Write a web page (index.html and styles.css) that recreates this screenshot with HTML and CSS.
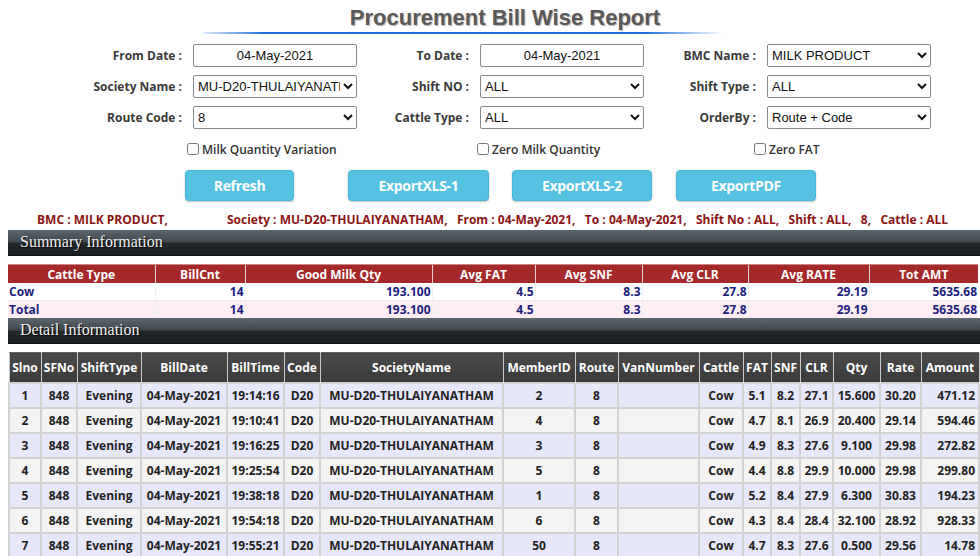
FILE: index.html
```html
<!DOCTYPE html>
<html>
<head>
<meta charset="utf-8">
<link rel="stylesheet" href="styles.css">
</head>
<body>
<div class="page">
  <h1 class="title">Procurement Bill Wise Report</h1>
  <div class="title-line"></div>

  <div class="form-grid">
    <div class="field"><label class="lbl">From Date :</label><input class="ctl txt" type="text" value="04-May-2021"></div>
    <div class="field"><label class="lbl">To Date :</label><input class="ctl txt" type="text" value="04-May-2021"></div>
    <div class="field"><label class="lbl">BMC Name :</label><select class="ctl"><option>MILK PRODUCT</option></select></div>

    <div class="field"><label class="lbl">Society Name :</label><select class="ctl"><option>MU-D20-THULAIYANATHAM</option></select></div>
    <div class="field"><label class="lbl">Shift NO :</label><select class="ctl"><option>ALL</option></select></div>
    <div class="field"><label class="lbl">Shift Type :</label><select class="ctl"><option>ALL</option></select></div>

    <div class="field"><label class="lbl">Route Code :</label><select class="ctl"><option>8</option></select></div>
    <div class="field"><label class="lbl">Cattle Type :</label><select class="ctl"><option>ALL</option></select></div>
    <div class="field"><label class="lbl">OrderBy :</label><select class="ctl"><option>Route + Code</option></select></div>
  </div>

  <div class="check-grid">
    <label class="chk chk1"><input type="checkbox">Milk Quantity Variation</label>
    <label class="chk chk2"><input type="checkbox">Zero Milk Quantity</label>
    <label class="chk chk3"><input type="checkbox">Zero FAT</label>
  </div>

  <div class="buttons">
    <button class="btn b-refresh">Refresh</button>
    <button class="btn b-x1">ExportXLS-1</button>
    <button class="btn b-x2">ExportXLS-2</button>
    <button class="btn b-pdf">ExportPDF</button>
  </div>

  <div class="criteria"><span class="crit-bmc">BMC : MILK PRODUCT,</span><span>Society : MU-D20-THULAIYANATHAM,&nbsp;&nbsp; From : 04-May-2021,&nbsp;&nbsp; To : 04-May-2021,&nbsp;&nbsp; Shift No : ALL,&nbsp;&nbsp; Shift : ALL,&nbsp;&nbsp; 8,&nbsp;&nbsp; Cattle : ALL</span></div>

  <div class="bar bar-summary">Summary Information</div>

  <table class="summary">
    <colgroup>
      <col style="width:147px"><col style="width:90px"><col style="width:187px"><col style="width:103px">
      <col style="width:107px"><col style="width:106px"><col style="width:121px"><col style="width:109px">
    </colgroup>
    <thead>
      <tr><th>Cattle Type</th><th>BillCnt</th><th>Good Milk Qty</th><th>Avg FAT</th><th>Avg SNF</th><th>Avg CLR</th><th>Avg RATE</th><th>Tot AMT</th></tr>
    </thead>
    <tbody>
      <tr class="s-row"><td class="l">Cow</td><td>14</td><td>193.100</td><td>4.5</td><td>8.3</td><td>27.8</td><td>29.19</td><td>5635.68</td></tr>
      <tr class="s-total"><td class="l">Total</td><td>14</td><td>193.100</td><td>4.5</td><td>8.3</td><td>27.8</td><td>29.19</td><td>5635.68</td></tr>
    </tbody>
  </table>

  <div class="bar bar-detail">Detail Information</div>

  <table class="detail">
    <colgroup>
      <col style="width:32px"><col style="width:36px"><col style="width:64px"><col style="width:86px"><col style="width:57px">
      <col style="width:36px"><col style="width:183px"><col style="width:72px"><col style="width:43px"><col style="width:81px">
      <col style="width:44px"><col style="width:28px"><col style="width:29px"><col style="width:33px"><col style="width:47px">
      <col style="width:41px"><col style="width:58px">
    </colgroup>
    <thead>
      <tr><th>Slno</th><th>SFNo</th><th>ShiftType</th><th>BillDate</th><th>BillTime</th><th>Code</th><th>SocietyName</th><th>MemberID</th><th>Route</th><th>VanNumber</th><th>Cattle</th><th>FAT</th><th>SNF</th><th>CLR</th><th>Qty</th><th>Rate</th><th>Amount</th></tr>
    </thead>
    <tbody>
      <tr class="odd"><td>1</td><td>848</td><td>Evening</td><td>04-May-2021</td><td>19:14:16</td><td>D20</td><td>MU-D20-THULAIYANATHAM</td><td>2</td><td>8</td><td></td><td>Cow</td><td>5.1</td><td>8.2</td><td>27.1</td><td>15.600</td><td>30.20</td><td class="r">471.12</td></tr>
      <tr class="even"><td>2</td><td>848</td><td>Evening</td><td>04-May-2021</td><td>19:10:41</td><td>D20</td><td>MU-D20-THULAIYANATHAM</td><td>4</td><td>8</td><td></td><td>Cow</td><td>4.7</td><td>8.1</td><td>26.9</td><td>20.400</td><td>29.14</td><td class="r">594.46</td></tr>
      <tr class="odd"><td>3</td><td>848</td><td>Evening</td><td>04-May-2021</td><td>19:16:25</td><td>D20</td><td>MU-D20-THULAIYANATHAM</td><td>3</td><td>8</td><td></td><td>Cow</td><td>4.9</td><td>8.3</td><td>27.6</td><td>9.100</td><td>29.98</td><td class="r">272.82</td></tr>
      <tr class="even"><td>4</td><td>848</td><td>Evening</td><td>04-May-2021</td><td>19:25:54</td><td>D20</td><td>MU-D20-THULAIYANATHAM</td><td>5</td><td>8</td><td></td><td>Cow</td><td>4.4</td><td>8.8</td><td>29.9</td><td>10.000</td><td>29.98</td><td class="r">299.80</td></tr>
      <tr class="odd"><td>5</td><td>848</td><td>Evening</td><td>04-May-2021</td><td>19:38:18</td><td>D20</td><td>MU-D20-THULAIYANATHAM</td><td>1</td><td>8</td><td></td><td>Cow</td><td>5.2</td><td>8.4</td><td>27.9</td><td>6.300</td><td>30.83</td><td class="r">194.23</td></tr>
      <tr class="even"><td>6</td><td>848</td><td>Evening</td><td>04-May-2021</td><td>19:54:18</td><td>D20</td><td>MU-D20-THULAIYANATHAM</td><td>6</td><td>8</td><td></td><td>Cow</td><td>4.3</td><td>8.4</td><td>28.4</td><td>32.100</td><td>28.92</td><td class="r">928.33</td></tr>
      <tr class="odd"><td>7</td><td>848</td><td>Evening</td><td>04-May-2021</td><td>19:55:21</td><td>D20</td><td>MU-D20-THULAIYANATHAM</td><td>50</td><td>8</td><td></td><td>Cow</td><td>4.7</td><td>8.3</td><td>27.6</td><td>0.500</td><td>29.56</td><td class="r">14.78</td></tr>
    </tbody>
  </table>
</div>
</body>
</html>
```

FILE: styles.css
```css
html, body {
  margin: 0;
  padding: 0;
  overflow: hidden;
  background: #ffffff;
}

body {
  font-family: "Open Sans", "Liberation Sans", sans-serif;
  color: #333;
}

.page {
  width: 972px;
  padding-left: 8px;
}

.title {
  margin: 0;
  padding: 5px 0 0 22px;
  text-align: center;
  font-family: "Liberation Sans", Arial, sans-serif;
  font-size: 22px;
  line-height: 26px;
  font-weight: bold;
  color: #595959;
  text-shadow: 1px 1px 1px #b5b5b5;
}

.title-line {
  margin: 1px 0 0 195px;
  width: 520px;
  height: 2px;
  background: linear-gradient(to right, rgba(20, 110, 225, 0.15), #1a6fe0 12%, #1a6fe0 85%, rgba(20, 110, 225, 0));
}

.form-grid {
  display: grid;
  grid-template-columns: repeat(3, 287px);
  row-gap: 8px;
  margin-top: 10px;
  padding-left: 62px;
}

.field {
  display: flex;
  align-items: center;
}

.lbl {
  width: 123px;
  padding-right: 11px;
  box-sizing: border-box;
  text-align: right;
  font-size: 12px;
  font-weight: bold;
  color: #3a3a3a;
}

.ctl {
  width: 164px;
  height: 23px;
  box-sizing: border-box;
  margin: 0;
  border: 1px solid #8a8a8a;
  border-radius: 2px;
  background: #fff;
  font-family: "Liberation Sans", Arial, sans-serif;
  font-size: 13px;
  color: #111;
  padding: 0;
}

.txt {
  text-align: center;
}

.check-grid {
  display: grid;
  grid-template-columns: repeat(3, 287px);
  padding-left: 62px;
  margin-top: 11px;
  height: 18px;
}

.chk {
  display: flex;
  align-items: center;
  gap: 3px;
  font-size: 12px;
  font-weight: 600;
  color: #333;
}

.chk input {
  margin: 0;
  width: 12px;
  height: 12px;
}

.chk1 { margin-left: 117px; }
.chk2 { margin-left: 120px; }
.chk3 { margin-left: 110px; }

.buttons {
  display: flex;
  margin-top: 12px;
  padding-left: 177px;
}

.btn {
  height: 31px;
  border: 1px solid #46b8da;
  border-radius: 4px;
  background: #56c2e2;
  color: #fff;
  font-family: "Open Sans", sans-serif;
  font-size: 14px;
  font-weight: bold;
  letter-spacing: -0.3px;
  box-shadow: 0 1px 2px rgba(0, 0, 0, 0.25);
  padding: 0;
}

.b-refresh { width: 109px; }
.b-x1 { width: 141px; margin-left: 54px; }
.b-x2 { width: 140px; margin-left: 23px; }
.b-pdf { width: 140px; margin-left: 24px; }

.criteria {
  margin-top: 11px;
  padding-left: 29px;
  font-size: 12px;
  font-weight: bold;
  color: #8b1414;
  line-height: 16px;
  white-space: nowrap;
}

.crit-bmc {
  display: inline-block;
  width: 190px;
}

.bar {
  width: 972px;
  height: 26px;
  box-sizing: border-box;
  padding-left: 12px;
  font-family: "Liberation Serif", "Times New Roman", serif;
  font-size: 16px;
  line-height: 24px;
  color: #f0f0f0;
  text-shadow: 1px 1px 1px #000;
  background: linear-gradient(#5d676e 0%, #3e474d 48%, #23282b 52%, #1b1e20 100%);
  border-bottom: 1px solid #111;
}

.bar-summary {
  margin-top: 2px;
}

.summary {
  margin-top: 8px;
  border-collapse: collapse;
  table-layout: fixed;
  width: 970px;
  font-size: 12px;
  font-weight: bold;
}

.summary th {
  background: #a5292b;
  color: #fff;
  height: 18px;
  padding: 0;
  border-left: 1px solid #e8d0d0;
  border-top: 1px solid #c88;
  line-height: 17px;
}

.summary th:first-child {
  border-left: none;
}

.summary td {
  text-align: right;
  color: #1d1d80;
  height: 17px;
  padding: 0 1px;
  line-height: 16px;
  border-left: 1px solid #f0f0f0;
}

.summary td.l {
  text-align: left;
  border-left: none;
}

.s-row td {
  background: #fff;
}

.s-total td {
  background: #fdeef3;
  border-top: 1px solid #f4e4ea;
}

.bar-detail {
  margin-top: 0;
}

.detail {
  margin-top: 8px;
  border-collapse: collapse;
  table-layout: fixed;
  width: 970px;
  font-size: 12px;
  font-weight: bold;
  color: #222;
}

.detail th {
  height: 29px;
  padding: 0;
  background: linear-gradient(#4a4a4a, #3a3a3a);
  color: #fff;
  border: 1px solid #c9c9c9;
  border-top-color: #666;
  white-space: nowrap;
}

.detail td {
  height: 23px;
  padding: 0;
  text-align: center;
  border: 2px solid #d2d2d2;
  white-space: nowrap;
}

.detail td.r {
  text-align: right;
  padding-right: 3px;
}

.detail tr.odd td {
  background: #e7e7fa;
}

.detail tr.even td {
  background: #f4f4f4;
}
```
